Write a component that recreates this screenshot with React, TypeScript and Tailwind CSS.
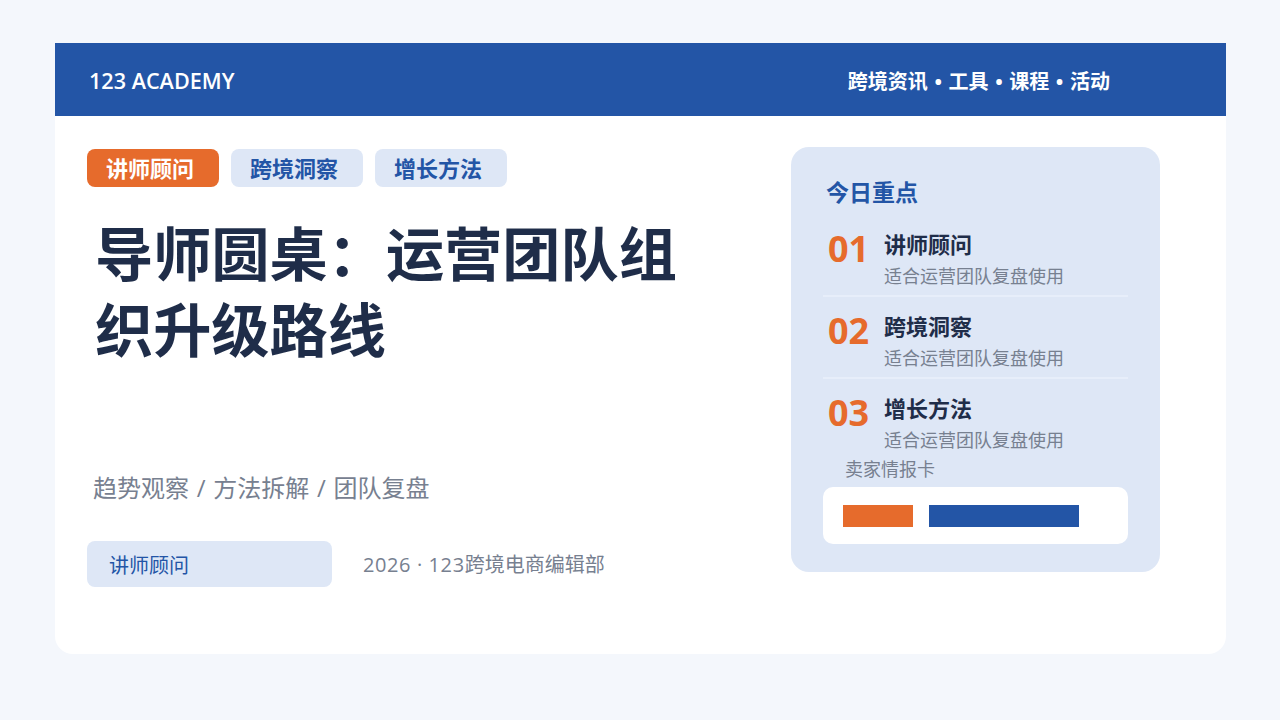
const font = { fontFamily: '"Open Sans", "Noto Sans CJK SC", sans-serif' };

const tags = ["跨境洞察", "增长方法"];

const items = [
  { no: "01", title: "讲师顾问" },
  { no: "02", title: "跨境洞察" },
  { no: "03", title: "增长方法" },
];

export default function App() {
  return (
    <div className="h-[720px] w-[1280px] overflow-hidden bg-[#f4f7fc] pl-[55px] pt-[43px]" style={font}>
      <div className="flex h-[611px] w-[1171px] flex-col overflow-hidden rounded-b-[18px] bg-white">
        {/* Header */}
        <div className="flex h-[73px] items-center justify-between bg-[#2355a6] pl-[34px] pr-[116px] pt-[4px] text-white">
          <span className="text-[21.6px] font-semibold">123 ACADEMY</span>
          <span className="text-[20px] font-bold [word-spacing:1.4px]">跨境资讯 • 工具 • 课程 • 活动</span>
        </div>

        <div className="flex flex-1 pl-[32px] pt-[31px]">
          {/* Left column */}
          <div className="w-[704px] pt-[2px]">
            <div className="flex gap-[12px]">
              <div className="flex h-[38px] w-[132px] items-center rounded-lg bg-[#e66b2c] pl-[19px] text-[22px] font-bold text-white">
                讲师顾问
              </div>
              {tags.map((t) => (
                <div key={t} className="flex h-[38px] w-[132px] items-center rounded-lg bg-[#dee7f6] pl-[19px] text-[22px] font-bold text-[#2355a6]">
                  {t}
                </div>
              ))}
            </div>
            <h1 className="mt-[29px] w-[620px] pl-[8px] text-[58.2px] font-bold leading-[76px] text-[#1f2d49]">
              导师圆桌：运营团队组织升级路线
            </h1>
            <p className="mt-[104px] pl-[6px] text-[24px] leading-[32px] text-[#778090] [word-spacing:1.5px]">
              趋势观察 / 方法拆解 / 团队复盘
            </p>
            <div className="mt-[37px] flex items-center">
              <div className="flex h-[46px] w-[245px] items-center rounded-lg bg-[#dee7f6] pl-[22px] pt-[3px] text-[20px] text-[#2355a6]">
                讲师顾问
              </div>
              <span className="ml-[31px] pt-[2px] text-[20px] text-[#778090]">
                <span className="tracking-[0.6px]">2026 · 123</span>跨境电商编辑部
              </span>
            </div>
          </div>

          {/* Right panel */}
          <div className="h-[425px] w-[369px] rounded-[18px] bg-[#dee7f6] px-[32px] pt-[29px]">
            <h2 className="pl-[3px] text-[23px] font-bold leading-[32px] text-[#2355a6]">今日重点</h2>
            <div className="mt-[7px]">
              {items.map((item, i) => (
                <div key={item.no} className={i < 2 ? "flex h-[82px] border-b-2 border-[#e7eefa] pt-[15px]" : "flex h-[77px] pt-[15px]"}>
                  <span className="w-[61px] pl-[5px] text-[36px] font-bold leading-[38px] text-[#e66b2c]">{item.no}</span>
                  <div>
                    <div className="text-[22px] font-bold leading-[28px] text-[#1f2d49]">{item.title}</div>
                    <div className="text-[18px] leading-[36px] text-[#778090]">适合运营团队复盘使用</div>
                  </div>
                </div>
              ))}
            </div>
            <div className="pl-[22px] text-[18px] leading-[26px] text-[#778090]">卖家情报卡</div>
            <div className="mt-[5px] flex h-[57px] w-[305px] items-center gap-[16px] rounded-[10px] bg-white pl-[20px]">
              <div className="h-[22px] w-[70px] bg-[#e66b2c]" />
              <div className="h-[22px] w-[150px] bg-[#2355a6]" />
            </div>
          </div>
        </div>
      </div>
    </div>
  );
}
